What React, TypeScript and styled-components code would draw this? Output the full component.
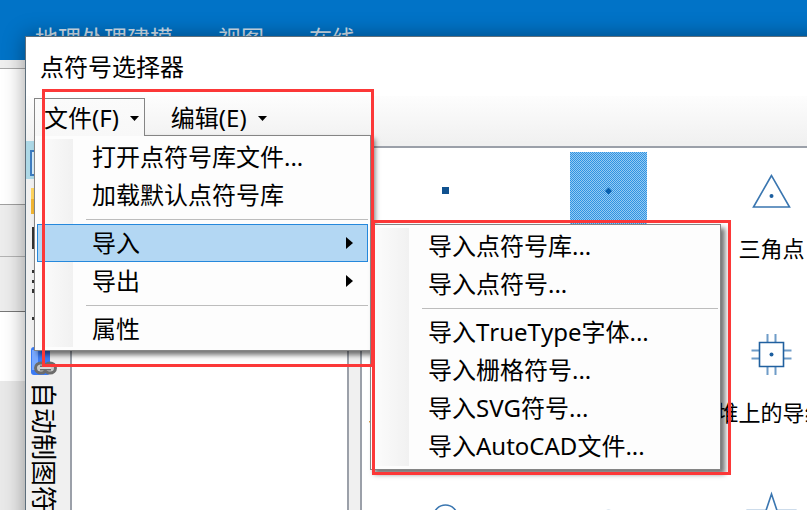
import React from "react";
import styled, { createGlobalStyle, css } from "styled-components";

const GlobalStyle = createGlobalStyle`
  *, *::before, *::after { box-sizing: border-box; }
  body {
    margin: 0;
    font-family: "Noto Sans", "Noto Sans CJK SC", sans-serif;
    font-size: 24px;
    font-kerning: none;
    line-height: 38px;
    color: #000;
  }
  button { font: inherit; font-kerning: none; color: inherit; }
`;

const Desktop = styled.div`
  position: relative;
  min-height: 100vh;
  overflow: hidden;
  background: #e9e9e9;
`;

const Ribbon = styled.nav`
  display: flex;
  align-items: flex-end;
  gap: 45px;
  height: 60px;
  padding: 0 35px;
  background: #0173c7;
`;

const RibbonTab = styled.a`
  font-size: 23px;
  line-height: 44px;
  height: 44px;
  color: #d3e2ef;
  text-decoration: none;
  white-space: nowrap;
`;

const Strip = styled.div<{ $height: number; $color: string; $line?: string }>`
  height: ${(p) => p.$height}px;
  background: ${(p) => p.$color};
  border-bottom: ${(p) => (p.$line ? `1px solid ${p.$line}` : "0")};
`;

const Dialog = styled.section`
  position: absolute;
  top: 36px;
  left: 25px;
  right: -40px;
  bottom: -40px;
  display: flex;
  flex-direction: column;
  border: 1px solid #5e6f7c;
  background: #f0f0f0;
  box-shadow: 0 0 20px rgba(0, 0, 0, 0.38);
`;

const Title = styled.h1`
  margin: 0;
  padding: 11px 14px 10px;
  font-size: 24px;
  font-weight: 400;
  background: #fff;
`;

const MenuBar = styled.nav`
  display: flex;
  align-items: flex-end;
  height: 45px;
  padding: 0 8px 5px;
  gap: 16px;
  background: linear-gradient(#fdfdfd, #f1f1f1);
`;

const MenuHost = styled.div`
  position: relative;
`;

const BarButton = styled.button<{ $open?: boolean }>`
  position: relative;
  z-index: 3;
  display: flex;
  align-items: center;
  gap: 11px;
  height: 38px;
  padding: 1px 5px 0 9px;
  border: 1px solid transparent;
  border-bottom: 0;
  background: none;
  white-space: nowrap;
  ${(p) =>
    p.$open &&
    css`
      border-color: #858585;
      background: linear-gradient(#fbfbfb, #f8f8f8);
    `}
`;

const Menu = styled.ul<{ $sub?: boolean }>`
  position: absolute;
  z-index: ${(p) => (p.$sub ? 4 : 2)};
  top: ${(p) => (p.$sub ? "0" : "37px")};
  left: ${(p) => (p.$sub ? "333px" : "0")};
  width: ${(p) => (p.$sub ? "351px" : "337px")};
  margin: 0;
  padding: 2px 2px ${(p) => (p.$sub ? "4px" : "2px")};
  list-style: none;
  border: 1px solid #858585;
  background:
    linear-gradient(90deg, #fcfcfc, #f1f1f1) 3px 3px / 35px calc(100% - 6px) no-repeat,
    #fdfdfd;
  box-shadow: 4px 4px 5px rgba(0, 0, 0, 0.55);
`;

const Item = styled.li`
  position: relative;
`;

const ItemButton = styled.button<{ $active?: boolean }>`
  display: flex;
  align-items: center;
  justify-content: space-between;
  width: 100%;
  height: 38px;
  padding: 0 14px 0 54px;
  border: 1px solid ${(p) => (p.$active ? "#2588dc" : "transparent")};
  background: ${(p) => (p.$active ? "#b3d7f3" : "none")};
  text-align: left;
  white-space: nowrap;
`;

const Divider = styled.li`
  height: 10px;
  padding: 5px 0 0 49px;
  &::before {
    content: "";
    display: block;
    height: 1px;
    background: #bdbdbd;
  }
`;

const Body = styled.div`
  display: flex;
  flex: 1;
  min-height: 0;
`;

const SideBar = styled.aside`
  display: flex;
  flex-direction: column;
  align-items: flex-start;
  width: 44px;
`;

const Tool = styled.button<{ $selected?: boolean }>`
  display: block;
  width: 40px;
  height: 38px;
  padding: 6px 0 0 4px;
  border: 0;
  background: ${(p) => (p.$selected ? "#add8e6" : "none")};
  svg { display: block; }
`;

const SideTab = styled.button`
  display: flex;
  flex-direction: column;
  align-items: center;
  gap: 6px;
  padding: 15px 0 0 4px;
  border: 0;
  background: none;
  svg { display: block; }
`;

const SideLabel = styled.span`
  writing-mode: vertical-rl;
  text-orientation: sideways;
  font-size: 26px;
  line-height: 26px;
  white-space: nowrap;
`;

const Panel = styled.div<{ $grow?: boolean }>`
  flex: ${(p) => (p.$grow ? "1" : "0 0 279px")};
  min-width: 0;
  margin-top: 5px;
  overflow: hidden;
  border: 2px solid #9ba0a9;
  background: #fff;
`;

const Splitter = styled.div`
  width: 11px;
`;

const Symbols = styled.div`
  display: grid;
  grid-template-columns: repeat(3, 163px);
  grid-auto-rows: 164px;
  padding: 4px 0 0 2px;
`;

const Symbol = styled.figure`
  display: flex;
  flex-direction: column;
  align-items: center;
  margin: 0;
`;

const Thumb = styled.div`
  width: 77px;
  height: 77px;
  svg { display: block; }
`;

const Caption = styled.figcaption`
  font-size: 22px;
  line-height: 38px;
  white-space: nowrap;
`;

const Marker = styled.div<{ $top: number; $left: number; $width: number; $height: number }>`
  position: absolute;
  z-index: 10;
  top: ${(p) => p.$top}px;
  left: ${(p) => p.$left}px;
  width: ${(p) => p.$width}px;
  height: ${(p) => p.$height}px;
  border: 3px solid #fc3838;
  pointer-events: none;
`;

const DownArrow = () => (
  <svg width="9" height="5" viewBox="0 0 9 5" aria-hidden="true">
    <path d="M0 0h9L4.5 5z" />
  </svg>
);

const RightArrow = () => (
  <svg width="7" height="12" viewBox="0 0 7 12" aria-hidden="true">
    <path d="M0 0v12l7-6z" />
  </svg>
);

const ink = "#3a76b0";

const Hatch = () => (
  <>
    <defs>
      <pattern id="hatch" width="2" height="2" patternUnits="userSpaceOnUse">
        <path d="M0 0h2v2H0z" fill="#96caf2" />
        <path d="M0 0h1v1H0zM1 1h1v1H1z" fill="#2f93e2" shapeRendering="crispEdges" />
      </pattern>
    </defs>
    <path d="M0 0h77v77H0z" fill="url(#hatch)" />
  </>
);

const drawings: Record<string, React.ReactNode> = {
  square: <path d="M35 35h7v7h-7z" fill="#10518f" />,
  dot: <path d="M38.5 35.5l3.5 3.5-3.5 3.5-3.500-3.500z" fill="#075fae" />,
  triangle: (
    <>
      <path d="M38.500 23.500L20.500 55h36z" fill="none" stroke={ink} strokeWidth="1.6" />
      <circle cx="38.500" cy="44" r="2" fill="#1d5f9f" />
    </>
  ),
  chip: (
    <>
      <path
        d="M34.5 18v8m8-8v8M34.500 50v9m8-9v9M18.500 34.500h8m-8 8h8M50.500 34.500h8m-8 8h8"
        stroke="#6f9cc8"
        strokeWidth="2"
      />
      <path d="M26.500 26.500h24v24h-24z" fill="none" stroke="#20609f" strokeWidth="1.600" />
      <circle cx="38.500" cy="38.500" r="2" fill="#1d5f9f" />
    </>
  ),
  ring: <circle cx="38.500" cy="37" r="12" fill="none" stroke={ink} strokeWidth="1.600" />,
  small: <circle cx="38.500" cy="35" r="5" fill="none" stroke="#b8cce0" strokeWidth="1" />,
  star: (
    <path
      d="M38.500 14L33 30.500H15.500L29 41l-5 17 14.500-10L53 58l-5-17 13.500-10.500H44z"
      fill="none"
      stroke={ink}
      strokeWidth="1.600"
    />
  ),
};

const symbols = [
  { draw: "square", name: "" },
  { draw: "dot", name: "", selected: true },
  { draw: "triangle", name: "三角点" },
  { draw: "triangle", name: "土堆上的三角点" },
  { draw: "dot", name: "" },
  { draw: "chip", name: "土堆上的导线点" },
  { draw: "ring", name: "" },
  { draw: "small", name: "" },
  { draw: "star", name: "" },
];

export default function App() {
  return (
    <Desktop>
      <GlobalStyle />
      <Ribbon>
        <RibbonTab href="#model">地理处理建模</RibbonTab>
        <RibbonTab href="#view">视图</RibbonTab>
        <RibbonTab href="#online">在线</RibbonTab>
      </Ribbon>
      <Strip $height={9} $color="#efefef" $line="#a8a8a8" />
      <Strip $height={136} $color="#ffffff" $line="#a0a0a0" />
      <Strip $height={52} $color="#ededed" $line="#b4b4b4" />
      <Strip $height={55} $color="#ededed" $line="#777777" />
      <Strip $height={69} $color="#ffffff" />

      <Dialog aria-label="点符号选择器">
        <Title>点符号选择器</Title>
        <MenuBar>
          <MenuHost>
            <BarButton $open>
              文件(F)
              <DownArrow />
            </BarButton>
            <Menu>
              <Item><ItemButton>打开点符号库文件...</ItemButton></Item>
              <Item><ItemButton>加载默认点符号库</ItemButton></Item>
              <Divider />
              <Item>
                <ItemButton $active>导入<RightArrow /></ItemButton>
                <Menu $sub>
                  <Item><ItemButton>导入点符号库...</ItemButton></Item>
                  <Item><ItemButton>导入点符号...</ItemButton></Item>
                  <Divider />
                  <Item><ItemButton>导入TrueType字体...</ItemButton></Item>
                  <Item><ItemButton>导入栅格符号...</ItemButton></Item>
                  <Item><ItemButton>导入SVG符号...</ItemButton></Item>
                  <Item><ItemButton>导入AutoCAD文件...</ItemButton></Item>
                </Menu>
              </Item>
              <Item><ItemButton>导出<RightArrow /></ItemButton></Item>
              <Divider />
              <Item><ItemButton>属性</ItemButton></Item>
            </Menu>
          </MenuHost>
          <MenuHost>
            <BarButton>
              编辑(E)
              <DownArrow />
            </BarButton>
          </MenuHost>
        </MenuBar>

        <Body>
          <SideBar>
            <Tool $selected aria-label="大图标">
              <svg width="26" height="26" viewBox="0 0 26 26">
                <path d="M1 1h24v24H1z" fill="#d6ebf7" stroke="#3d7cc0" strokeWidth="2" />
              </svg>
            </Tool>
            <Tool aria-label="打开">
              <svg width="28" height="32" viewBox="0 0 28 32">
                <path d="M1 3h10l3 4h13v22H1z" fill="#ffd45e" />
                <path d="M1 14h26v15H1z" fill="#f2b632" />
              </svg>
            </Tool>
            <Tool aria-label="保存">
              <svg width="28" height="28" viewBox="0 0 28 28">
                <path d="M2 2h22v22H2z" fill="#333" />
              </svg>
            </Tool>
            <Tool aria-label="列表">
              <svg width="28" height="32" viewBox="0 0 28 32">
                <path d="M2 9h20v3H2zM2 19h20v3H2zM2 28h20v4H2z" fill="#333" />
              </svg>
            </Tool>
            <Tool aria-label="更多">
              <svg width="28" height="28" viewBox="0 0 28 28">
                <path d="M2 16h4v3H2z" fill="#333" />
              </svg>
            </Tool>
            <SideTab>
              <svg width="28" height="30" viewBox="0 0 28 30">
                <rect x="1" y="1" width="19" height="28" rx="3" fill="#3b7bf5" />
                <path d="M2 4h6v20H2z" fill="#79a9ff" />
                <g fill="#c9c9c9" stroke="#6c6c6c" strokeWidth="3">
                  <ellipse cx="11" cy="22" rx="5.500" ry="5" />
                  <ellipse cx="20" cy="22" rx="5.500" ry="5" />
                </g>
                <path d="M10 22h11" stroke="#6c6c6c" strokeWidth="5" />
                <path d="M10 22h11" stroke="#d8d8d8" strokeWidth="2" />
              </svg>
              <SideLabel>自动制图符号</SideLabel>
            </SideTab>
          </SideBar>
          <Panel />
          <Splitter />
          <Panel $grow>
            <Symbols>
              {symbols.map((s, i) => (
                <Symbol key={i}>
                  <Thumb>
                    <svg width="77" height="77" viewBox="0 0 77 77" aria-hidden="true">
                      {s.selected && <Hatch />}
                      {drawings[s.draw]}
                    </svg>
                  </Thumb>
                  {s.name && <Caption>{s.name}</Caption>}
                </Symbol>
              ))}
            </Symbols>
          </Panel>
        </Body>
      </Dialog>

      <Marker $top={89} $left={42} $width={332} $height={278} />
      <Marker $top={220} $left={372} $width={359} $height={255} />
    </Desktop>
  );
}
